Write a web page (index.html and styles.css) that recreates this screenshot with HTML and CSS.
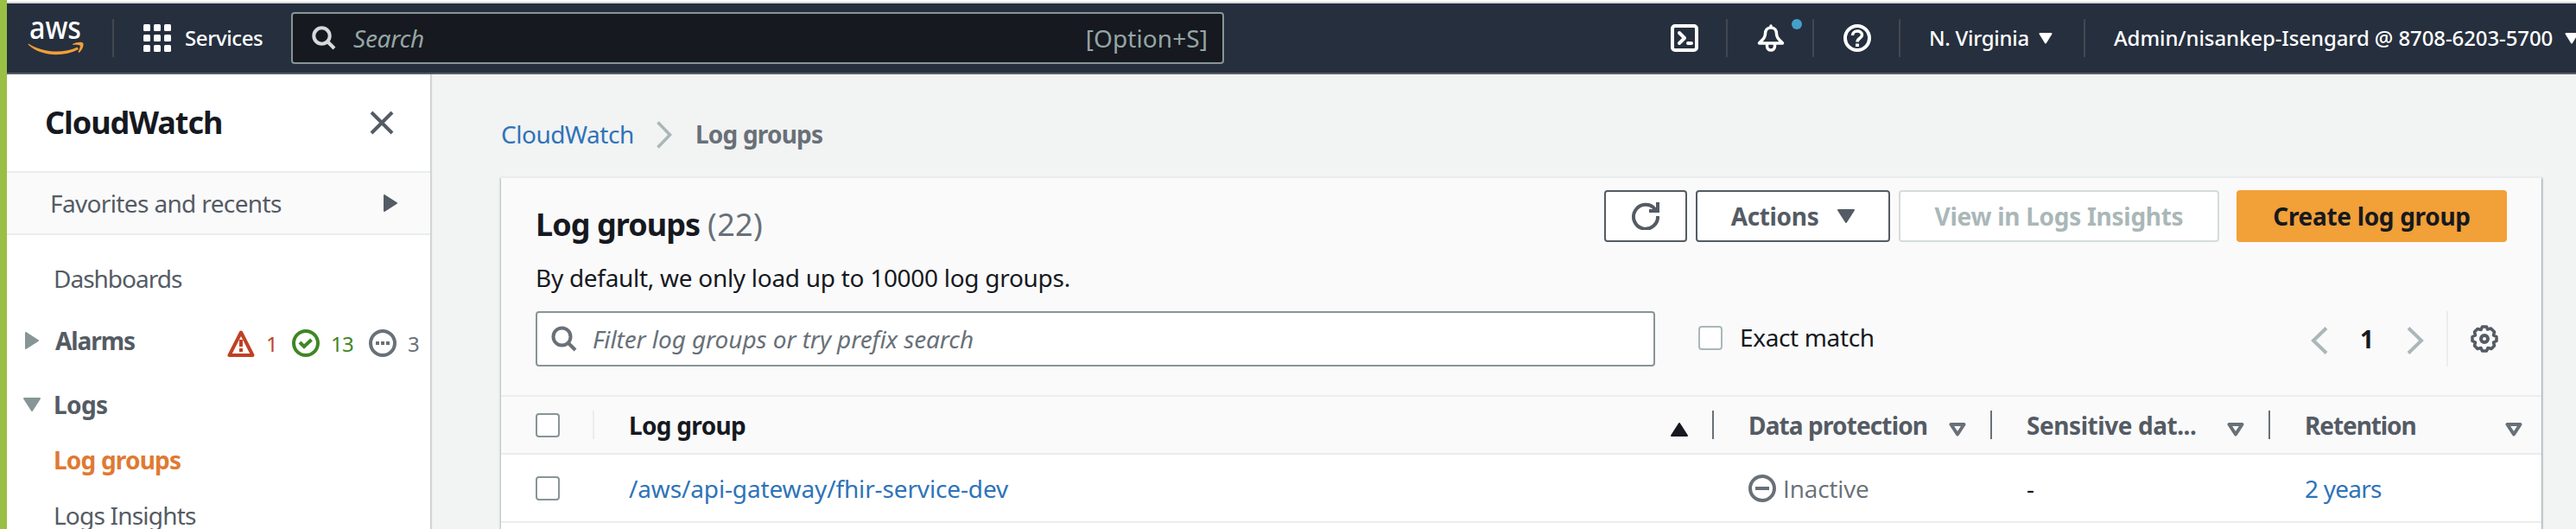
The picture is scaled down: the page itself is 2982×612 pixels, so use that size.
FILE: index.html
```
<!DOCTYPE html>
<html lang="en">
<head>
<meta charset="utf-8">
<title>CloudWatch - Log groups</title>
<link rel="stylesheet" href="styles.css">
</head>
<body>
<div class="page">
  <header class="topbar">
    <svg class="logo" width="66" height="44" viewBox="0 0 66 44">
      <text x="2" y="23" class="logo-text" textLength="60" lengthAdjust="spacingAndGlyphs">aws</text>
      <path d="M1 28.500C18 39.500 42 40 57.500 32.500L59 35C41 44.500 15 43.500 .5 29.500Z" fill="#f19f38"/>
      <path d="M52 29C57 26.500 64 26 64.500 28.500C65 32 62.500 36.500 59.500 39L58.500 38C60 35 61.500 31.500 60.500 30.500C59 29.500 55 29.500 52 29.800Z" fill="#f19f38"/>
    </svg>
    <i class="rule rule-logo"></i>
    <div class="waffle"><i></i><i></i><i></i><i></i><i></i><i></i><i></i><i></i><i></i></div>
    <span class="services">Services</span>
    <div class="search">
      <svg width="28" height="28" viewBox="0 0 28 28" fill="none" stroke="#d5dbdb" stroke-width="4"><circle cx="11.500" cy="11.500" r="9.200"/><path d="M18 18L26 26"/></svg>
      <span class="search-hint">Search</span>
      <span class="shortcut">[Option+S]</span>
    </div>
    <div class="tools">
      <svg width="32" height="32" viewBox="0 0 32 32" fill="none" stroke="#fff" stroke-width="4" stroke-linejoin="round" stroke-linecap="round"><rect x="2" y="2" width="28" height="28" rx="3"/><path d="M10 10L16 16L10 22M20 22H24"/></svg>
      <i class="rule"></i>
      <div class="bell">
        <svg width="32" height="32" viewBox="0 0 32 32" fill="none" stroke="#fff" stroke-width="3.500" stroke-linejoin="round" stroke-linecap="round"><path d="M16 2V4C11.500 4 9.500 7.500 9.500 11C9.500 16.500 6 18 2.500 22H29.500C26 18 22.500 16.500 22.500 11C22.500 7.500 20.500 4 16 4M11.500 23V25.500C11.500 31.500 20.500 31.500 20.500 25.500V23"/></svg>
        <i class="dot"></i>
      </div>
      <i class="rule"></i>
      <svg width="32" height="32" viewBox="0 0 32 32" fill="none" stroke="#fff" stroke-width="4"><circle cx="16" cy="16" r="14"/><path d="M10.500 13C10.500 6.500 21.500 6.500 21.500 12.500C21.500 16.500 16 16 16 20.500" stroke-width="3.500"/><path d="M16 22.500V26"/></svg>
      <i class="rule"></i>
      <span class="region">N. Virginia</span>
      <svg class="region-caret" width="16" height="13" viewBox="0 0 16 13"><path d="M1.500 1H14.500L8 11.500Z" fill="#fff" stroke="#fff" stroke-width="2" stroke-linejoin="round"/></svg>
      <i class="rule"></i>
      <span class="account">Admin/nisankep-Isengard @ 8708-6203-5700</span>
      <svg width="16" height="13" viewBox="0 0 16 13"><path d="M1.500 1H14.500L8 11.500Z" fill="#fff" stroke="#fff" stroke-width="2" stroke-linejoin="round"/></svg>
    </div>
  </header>

  <div class="body">
    <nav class="sidebar">
      <div class="side-head">
        <h2 class="side-title">CloudWatch</h2>
        <svg width="28" height="28" viewBox="0 0 28 28" stroke="#545b64" stroke-width="4"><path d="M2 2L26 26M26 2L2 26"/></svg>
      </div>
      <div class="favorites">
        <span class="fav-text">Favorites and recents</span>
        <svg width="16" height="20" viewBox="0 0 16 20"><path d="M1 1L15 10L1 19Z" fill="#545b64" stroke="#545b64" stroke-width="2" stroke-linejoin="round"/></svg>
      </div>
      <ul class="side-list">
        <li class="item item-dash"><span class="t-dash">Dashboards</span></li>
        <li class="item item-alarms">
          <svg class="twisty" width="20" height="20" viewBox="0 0 20 20"><path d="M3 1L17 10L3 19Z" fill="#879596" stroke="#879596" stroke-width="2" stroke-linejoin="round"/></svg>
          <b class="t-alarms">Alarms</b>
          <div class="states">
            <svg width="32" height="32" viewBox="0 0 32 32" fill="none" stroke="#bf4125" stroke-width="4" stroke-linejoin="round"><path d="M16 3.500L2.500 30H29.500Z"/><path d="M16 12V20M16 22V26"/></svg>
            <span class="n n-alarm">1</span>
            <svg width="32" height="32" viewBox="0 0 32 32" fill="none" stroke="#3f8624" stroke-width="4"><circle cx="16" cy="16" r="14"/><path d="M9 15L14 20L22.500 12"/></svg>
            <span class="n n-ok">13</span>
            <svg width="32" height="32" viewBox="0 0 32 32" fill="none" stroke="#687078" stroke-width="4"><circle cx="16" cy="16" r="14"/><path d="M8 16H12M14 16H18M20 16H24"/></svg>
            <span class="n n-none">3</span>
          </div>
        </li>
        <li class="item item-logs">
          <svg class="twisty" width="20" height="16" viewBox="0 0 20 16"><path d="M1 1H19L10 15Z" fill="#879596" stroke="#879596" stroke-width="2" stroke-linejoin="round"/></svg>
          <b class="t-logs">Logs</b>
        </li>
        <li class="item item-groups"><b class="t-groups">Log groups</b></li>
        <li class="item item-insights"><span class="t-insights">Logs Insights</span></li>
      </ul>
    </nav>

    <main class="main">
      <div class="crumbs">
        <a class="crumb-link">CloudWatch</a>
        <svg class="crumb-sep" width="20" height="32" viewBox="0 0 20 32" fill="none" stroke="#aab7b8" stroke-width="3.600"><path d="M2.500 1.500L16.500 16L2.500 30.500"/></svg>
        <b class="crumb-here">Log groups</b>
      </div>
      <section class="panel">
        <div class="panel-head">
          <div class="titles">
            <h1 class="title"><span class="title-main">Log groups</span><span class="count">(22)</span></h1>
            <p class="desc">By default, we only load up to 10000 log groups.</p>
          </div>
          <div class="actions">
            <button class="btn btn-refresh"><svg width="32" height="32" viewBox="0 0 32 32" fill="none" stroke="#545b64" stroke-width="4"><path d="M30 16A14 14 0 1 1 26.500 7.500L29 10.500"/><path d="M30 0V10H20"/></svg></button>
            <button class="btn btn-actions"><span class="t-actions">Actions</span><svg width="20" height="16" viewBox="0 0 20 16"><path d="M1 1H19L10 15Z" fill="#545b64" stroke="#545b64" stroke-width="2" stroke-linejoin="round"/></svg></button>
            <button class="btn btn-view">View in Logs Insights</button>
            <button class="btn btn-create">Create log group</button>
          </div>
        </div>
        <div class="filters">
          <div class="filter">
            <svg width="30" height="30" viewBox="0 0 30 30" fill="none" stroke="#687078" stroke-width="4"><circle cx="12.500" cy="12.500" r="10"/><path d="M19.500 19.500L28 28"/></svg>
            <span class="filter-hint">Filter log groups or try prefix search</span>
          </div>
          <i class="box box-light"></i>
          <span class="exact">Exact match</span>
          <div class="pager">
            <svg width="20" height="32" viewBox="0 0 20 32" fill="none" stroke="#aab7b8" stroke-width="4"><path d="M18 1.500L3 16L18 30.500"/></svg>
            <b class="page-no">1</b>
            <svg width="20" height="32" viewBox="0 0 20 32" fill="none" stroke="#aab7b8" stroke-width="4"><path d="M2 1.500L17 16L2 30.500"/></svg>
          </div>
          <div class="prefs">
            <svg width="32" height="32" viewBox="0 0 32 32" fill="none" stroke="#545b64" stroke-width="4" stroke-linejoin="round"><path d="M13.500 2H18.500L19.500 5L23.500 4L27.500 8L26.500 12L30 13.500V18.500L26.500 20L27.500 24L24 27.500L20 26.500L18.500 30H13.500L12 26.500L8 27.500L4.500 24L5.500 20L2 18.500V13.500L5.500 12L4.500 8L8 4.500L12 5.500Z" stroke-width="3.500"/><circle cx="16" cy="16" r="4"/></svg>
          </div>
        </div>
        <div class="grid head">
          <div class="cell cell-check"><i class="box"></i></div>
          <div class="cell"><b class="h-group">Log group</b><svg width="20" height="16" viewBox="0 0 20 16"><path d="M10 1L19 15H1Z" fill="#16191f" stroke="#16191f" stroke-width="2" stroke-linejoin="round"/></svg></div>
          <div class="cell"><b class="h-data">Data protection</b><svg width="20" height="16" viewBox="0 0 20 16"><path d="M2.500 2H17.500L10 13.500Z" fill="none" stroke="#687078" stroke-width="4" stroke-linejoin="round"/></svg></div>
          <div class="cell"><b class="h-sens">Sensitive dat...</b><svg width="20" height="16" viewBox="0 0 20 16"><path d="M2.500 2H17.500L10 13.500Z" fill="none" stroke="#687078" stroke-width="4" stroke-linejoin="round"/></svg></div>
          <div class="cell cell-last"><b class="h-ret">Retention</b><svg width="20" height="16" viewBox="0 0 20 16"><path d="M2.500 2H17.500L10 13.500Z" fill="none" stroke="#687078" stroke-width="4" stroke-linejoin="round"/></svg></div>
        </div>
        <div class="grid row">
          <div class="cell cell-check"><i class="box"></i></div>
          <div class="cell"><a class="d-group">/aws/api-gateway/fhir-service-dev</a></div>
          <div class="cell cell-status"><svg width="32" height="32" viewBox="0 0 32 32" fill="none" stroke="#687078" stroke-width="4"><circle cx="16" cy="16" r="14"/><path d="M8 16H24"/></svg><span class="d-inactive">Inactive</span></div>
          <div class="cell"><span>-</span></div>
          <div class="cell cell-last"><a class="d-ret">2 years</a></div>
        </div>
        <div class="row-next"></div>
      </section>
    </main>
  </div>
</div>
</body>
</html>
```

FILE: styles.css
```
* { box-sizing: border-box; }

body {
  margin: 0;
  font: 28px/38px "Noto Sans", sans-serif;
  color: #16191f;
  background: #f2f3f3;
}

h1, h2, p, ul { margin: 0; padding: 0; font-weight: inherit; }
svg { display: block; flex: none; }
a { color: #2e73b8; }

.page {
  width: 2982px;
  height: 612px;
  overflow: hidden;
  border-left: 8px solid #99bf45;
}

/* Top navigation */
.topbar {
  height: 86px;
  padding: 0 0 0 24px;
  display: flex;
  align-items: center;
  color: #fff;
  font-size: 24px;
  white-space: nowrap;
  background: linear-gradient(#fff 0 2px, #d9d9d9 2px 4px, #262f3e 4px 84px, #575c65 84px);
}
.topbar > * { flex: none; margin-top: 2px; }
.logo { overflow: visible; }
.logo-text { font: 500 37px "Noto Sans", sans-serif; fill: #fff; }
.rule { width: 2px; height: 44px; background: #434750; }
.rule-logo { margin-left: 32px; }
.waffle {
  margin-left: 34px;
  display: grid;
  grid-template-columns: repeat(3, 8px);
  gap: 4px;
}
.waffle i { height: 8px; border-radius: 1.5px; background: #fff; }
.services { width: 123px; margin-left: 16px; letter-spacing: -.4px; font-weight: 500; }
.search {
  width: 1080px;
  height: 60px;
  padding: 0 17px 0 22px;
  display: flex;
  align-items: center;
  border: 2px solid #879596;
  border-radius: 4px;
  background: #16191f;
  color: #95a5a6;
  font-size: 28px;
}
.search-hint { margin-left: 20px; font-style: italic; letter-spacing: -.26px; }
.shortcut { margin-left: auto; letter-spacing: .08px; }
.tools { flex: 1 0 auto; margin-left: 517px; display: flex; align-items: center; gap: 32px; font-weight: 500; }
.tools .rule + * { margin-left: 2px; }
.bell { position: relative; }
.dot {
  position: absolute;
  left: 40px;
  top: -6px;
  width: 12px;
  height: 12px;
  border-radius: 50%;
  background: #44a0c9;
}
.tools .region { width: 116px; margin-left: 1px; letter-spacing: -.3px; }
.region-caret { margin: 0 4px 0 -21px; }
.tools .account { width: 511px; margin-left: 1px; margin-right: -21px; letter-spacing: -.1px; }

.body { display: flex; height: 526px; }

/* Side navigation */
.sidebar {
  width: 491px;
  flex: none;
  background: #fff;
  border-right: 1px solid #cbd1d1;
  box-shadow: 1px 0 1px rgba(0, 28, 36, .12);
  color: #545b64;
}
.side-head {
  height: 112px;
  padding: 0 42px 0 44px;
  display: flex;
  align-items: center;
  justify-content: space-between;
}
.side-title { font: 700 36px/50px "Noto Sans", sans-serif; letter-spacing: -1.04px; color: #16191f; }
.favorites {
  height: 74px;
  padding: 0 38px 0 50px;
  display: flex;
  align-items: center;
  justify-content: space-between;
  border: solid #eaeded;
  border-width: 2px 0;
  background: #fafafa;
}
.fav-text { letter-spacing: -.64px; }
.side-list { list-style: none; padding: 31px 12px 0 19px; }
.item { height: 38px; display: flex; align-items: center; padding-left: 35px; }
.item-dash { margin-bottom: 34px; }
.item-alarms { margin-bottom: 36px; padding-left: 0; }
.item-logs { margin-bottom: 26px; padding-left: 0; }
.item-groups { margin-bottom: 26px; }
.twisty { margin-right: 17px; }
.t-dash { letter-spacing: -1px; }
.t-alarms { letter-spacing: -1.06px; }
.t-logs { margin-left: -2px; letter-spacing: -.62px; }
.t-groups { color: #df7a33; letter-spacing: -.8px; }
.t-insights { letter-spacing: -.8px; }
.states { margin: 6px 0 0 auto; display: flex; align-items: center; font-size: 24px; }
.n { position: relative; top: 1px; margin-left: 13px; white-space: nowrap; }
.n-alarm { width: 30px; color: #bf4125; }
.n-ok { width: 44px; color: #3f8624; letter-spacing: -.73px; }
.n-none { width: 14px; color: #687078; }

/* Content */
.main { flex: none; width: 2443px; padding: 50px 0 0 81px; }
.crumbs { display: flex; align-items: center; height: 38px; }
.crumb-link { width: 153px; letter-spacing: -.46px; }
.crumb-sep { margin: 2px 26px 0 26px; }
.crumb-here { color: #687078; letter-spacing: -.8px; }

.panel {
  width: 2362px;
  height: 420px;
  margin-top: 30px;
  background: #fafafa;
  border-top: 2px solid #eaeded;
  box-shadow: 1px 2px 2px rgba(0, 28, 36, .4), -1px 2px 2px rgba(0, 28, 36, .25);
}
.panel-head { height: 154px; padding: 0 40px; display: flex; justify-content: space-between; }
.titles { padding-top: 29px; }
.title { height: 50px; display: flex; font-size: 36px; line-height: 50px; }
.title-main { width: 199px; font-weight: 700; letter-spacing: -.95px; }
.count { color: #687078; letter-spacing: .34px; }
.desc { margin: 17px 0 0; letter-spacing: -.29px; }
.actions { padding-top: 14px; display: flex; gap: 10px; }
.btn {
  height: 60px;
  padding: 0;
  display: flex;
  align-items: center;
  justify-content: center;
  font: 700 28px/38px "Noto Sans", sans-serif;
  white-space: nowrap;
  color: #545b64;
  background: #fff;
  border: 2px solid #545b64;
  border-radius: 4px;
}
.btn-refresh { width: 96px; }
.btn-actions { width: 225px; gap: 22px; }
.t-actions { letter-spacing: -.34px; }
.btn-view { width: 371px; color: #aab7b8; border-color: #d5dbdb; letter-spacing: -.28px; }
.btn-create { width: 313px; margin-left: 10px; color: #16191f; background: #f2a038; border-color: #f2a038; letter-spacing: -.32px; }

.filters { height: 97px; padding: 0 50px 33px 40px; display: flex; align-items: center; }
.filter {
  width: 1296px;
  height: 64px;
  padding-left: 16px;
  display: flex;
  align-items: center;
  border: 2px solid #879596;
  border-radius: 4px;
  background: #fff;
  color: #687078;
}
.filter-hint { margin-left: 18px; font-style: italic; letter-spacing: -.09px; }
.box { width: 28px; height: 28px; border: 2px solid #879596; border-radius: 4px; background: #fff; }
.box-light { margin: -3px 20px 0 50px; border-color: #aab7b8; }
.exact { margin-top: -4px; letter-spacing: -.36px; }
.pager { margin-left: auto; display: flex; align-items: center; }
.pager svg { margin-top: 3px; }
.page-no { width: 16px; margin: 0 38px 0 37px; }
.prefs { height: 64px; margin-left: 26px; padding-left: 26px; display: flex; align-items: center; border-left: 2px solid #eaeded; }

.grid { display: grid; grid-template-columns: 108px 1296px 322px 322px 314px; align-items: center; }
.cell { height: 33px; padding: 0 28px 0 40px; display: flex; align-items: center; justify-content: space-between; white-space: nowrap; }
.head { height: 69px; border: solid #eaeded; border-width: 2px 0; color: #545b64; }
.head .cell { border-right: 2px solid #687078; }
.head .cell-check { border-color: #eaeded; }
.head .cell-last { padding-right: 22px; border: 0; }
.head svg { margin-top: 11px; }
.h-group { color: #16191f; letter-spacing: -.69px; }
.h-data { letter-spacing: -.87px; }
.h-sens { letter-spacing: -.44px; }
.h-ret { letter-spacing: -1.08px; }
.row { height: 79px; background: #fff; border-bottom: 2px solid #eaeded; }
.row .cell-status { justify-content: flex-start; gap: 8px; color: #687078; }
.d-group { letter-spacing: -.14px; }
.d-inactive { font-family: "Open Sans", sans-serif; letter-spacing: -.14px; }
.d-ret { letter-spacing: -.77px; }
.row-next { height: 17px; background: #fff; }
```
